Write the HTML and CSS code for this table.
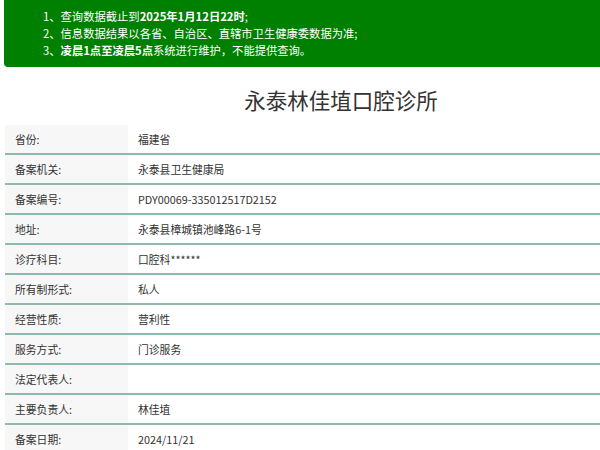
FILE: index.html
```html
<!DOCTYPE html>
<html lang="zh-CN">
<head>
<meta charset="utf-8">
<title>永泰林佳埴口腔诊所</title>
<link rel="stylesheet" href="styles.css">
</head>
<body>
<div class="page">
  <div class="notice">
    <ol class="notice-list">
      <li>1、查询数据截止到<b>2025年1月12日22时</b>;</li>
      <li>2、信息数据结果以各省、自治区、直辖市卫生健康委数据为准;</li>
      <li>3、<b>凌晨1点至凌晨5点</b>系统进行维护，不能提供查询。</li>
    </ol>
  </div>
  <h1 class="title">永泰林佳埴口腔诊所</h1>
  <div class="info">
    <div class="row"><div class="label">省份:</div><div class="value">福建省</div></div>
    <div class="row"><div class="label">备案机关:</div><div class="value">永泰县卫生健康局</div></div>
    <div class="row"><div class="label">备案编号:</div><div class="value">PDY00069-335012517D2152</div></div>
    <div class="row"><div class="label">地址:</div><div class="value">永泰县樟城镇池峰路6-1号</div></div>
    <div class="row"><div class="label">诊疗科目:</div><div class="value">口腔科******</div></div>
    <div class="row"><div class="label">所有制形式:</div><div class="value">私人</div></div>
    <div class="row"><div class="label">经营性质:</div><div class="value">营利性</div></div>
    <div class="row"><div class="label">服务方式:</div><div class="value">门诊服务</div></div>
    <div class="row"><div class="label">法定代表人:</div><div class="value"></div></div>
    <div class="row"><div class="label">主要负责人:</div><div class="value">林佳埴</div></div>
    <div class="row"><div class="label">备案日期:</div><div class="value">2024/11/21</div></div>
  </div>
</div>
</body>
</html>
```
FILE: styles.css
```css
html, body {
  margin: 0;
  padding: 0;
  overflow: hidden;
  background: #fff;
}
body {
  font-family: "Microsoft YaHei", "Noto Sans CJK SC", sans-serif;
  color: #333;
}
.page {
  width: 674px;
  margin-left: 4px;
}
.notice {
  background: #008000;
  color: #fff;
  border-radius: 0 0 4px 4px;
  padding: 8px 0 8px 39px;
  height: 51px;
}
.notice-list {
  list-style: none;
  margin: 0;
  padding: 0;
  font-size: 11.3px;
  line-height: 17px;
}
.notice-list b {
  font-weight: bold;
}
.title {
  margin: 0;
  padding: 18px 0 0;
  height: 40px;
  font-size: 21.5px;
  font-weight: normal;
  line-height: 30px;
  text-align: center;
  color: #333;
}
.info {
  margin-left: 1px;
}
.row {
  display: flex;
  height: 28px;
  border-bottom: 2px solid #8fb9ae;
  font-size: 10.8px;
  line-height: 28px;
}
.row:last-child {
  border-bottom: none;
}
.label {
  width: 123px;
  background: #f7f7f7;
  padding-left: 10px;
  box-sizing: border-box;
}
.value {
  padding-left: 10px;
  flex: 1;
}
```
